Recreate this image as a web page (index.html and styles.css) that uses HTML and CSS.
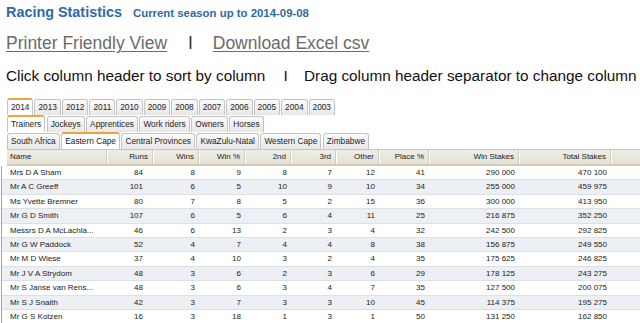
FILE: index.html
```html
<!DOCTYPE html>
<html lang="en">
<head>
  <meta charset="UTF-8" />
  <meta name="viewport" content="width=device-width, initial-scale=1.0" />
  <title>Racing Statistics</title>
  <link rel="stylesheet" href="styles.css">
</head>
<body>
  <div class="top">
    <h1 class="title">Racing Statistics <span class="season">Current season up to 2014-09-08</span></h1>

    <p class="links">
      <a href="#">Printer Friendly View</a>
      <span class="sep">I</span>
      <a href="#">Download Excel csv</a>
    </p>

    <p class="hint">Click column header to sort by column <span class="sep">I</span> Drag column header separator to change column</p>
  </div>

  <div class="tabs years">
    <span class="tab active">2014</span>
    <span class="tab">2013</span>
    <span class="tab">2012</span>
    <span class="tab">2011</span>
    <span class="tab">2010</span>
    <span class="tab">2009</span>
    <span class="tab">2008</span>
    <span class="tab">2007</span>
    <span class="tab">2006</span>
    <span class="tab">2005</span>
    <span class="tab">2004</span>
    <span class="tab">2003</span>
  </div>
  <div class="tabs">
    <span class="tab active">Trainers</span>
    <span class="tab">Jockeys</span>
    <span class="tab">Apprentices</span>
    <span class="tab">Work riders</span>
    <span class="tab">Owners</span>
    <span class="tab">Horses</span>
  </div>
  <div class="tabs">
    <span class="tab">South Africa</span>
    <span class="tab active">Eastern Cape</span>
    <span class="tab">Central Provinces</span>
    <span class="tab">KwaZulu-Natal</span>
    <span class="tab">Western Cape</span>
    <span class="tab">Zimbabwe</span>
  </div>

  <div class="grid">
    <div class="grid-head">
      <span class="hcell name">Name</span>
      <span class="hcell">Runs</span>
      <span class="hcell">Wins</span>
      <span class="hcell">Win %</span>
      <span class="hcell">2nd</span>
      <span class="hcell">3rd</span>
      <span class="hcell">Other</span>
      <span class="hcell">Place %</span>
      <span class="hcell">Win Stakes</span>
      <span class="hcell">Total Stakes</span>
      <span class="hcell filler"></span>
    </div>
    <div class="grid-body" id="rows"></div>
  </div>

  <script>
    const trainers = [
      ["Mrs D A Sham", 84, 8, 9, 8, 7, 12, 41, "290 000", "470 100"],
      ["Mr A C Greeff", 101, 6, 5, 10, 9, 10, 34, "255 000", "459 975"],
      ["Ms Yvette Bremner", 80, 7, 8, 5, 2, 15, 36, "300 000", "413 950"],
      ["Mr G D Smith", 107, 6, 5, 6, 4, 11, 25, "216 875", "352 250"],
      ["Messrs D A McLachla...", 46, 6, 13, 2, 3, 4, 32, "242 500", "292 825"],
      ["Mr G W Paddock", 52, 4, 7, 4, 4, 8, 38, "156 875", "249 550"],
      ["Mr M D Wiese", 37, 4, 10, 3, 2, 4, 35, "175 625", "246 825"],
      ["Mr J V A Strydom", 48, 3, 6, 2, 3, 6, 29, "178 125", "243 275"],
      ["Mr S Janse van Rens...", 48, 3, 6, 3, 4, 7, 35, "127 500", "200 075"],
      ["Mr S J Snaith", 42, 3, 7, 3, 3, 10, 45, "114 375", "195 275"],
      ["Mr G S Kotzen", 16, 3, 18, 1, 3, 1, 50, "131 250", "162 850"]
    ];

    const rows = document.getElementById("rows");
    trainers.forEach(t => {
      const row = document.createElement("div");
      row.className = "row";
      t.forEach((value, i) => {
        const cell = document.createElement("span");
        cell.className = i === 0 ? "cell name" : "cell";
        cell.textContent = value;
        row.appendChild(cell);
      });
      rows.appendChild(row);
    });
  </script>
</body>
</html>
```

FILE: styles.css
```css
:root {
  --title-blue: #2f6aa5;
  --link-gray: #6b6b6b;
  --tab-border: #c4c4c4;
  --tab-active: #f2a23c;
  --head-bg: #e9e7dd;
  --stripe: #eceff3;
  --line: #dde1e6;
}

* {
  box-sizing: border-box;
}

body {
  margin: 0;
  font-family: 'Liberation Sans', Arial, sans-serif;
  color: #111;
  background: #fff;
  overflow: hidden;
}

.top {
  padding-left: 6px;
}

.title {
  margin: 0;
  height: 24px;
  line-height: 24px;
  font-size: 14.4px;
  font-weight: bold;
  color: var(--title-blue);
}

.season {
  margin-left: 7px;
  font-size: 11.4px;
}

.links {
  margin: 7px 0 0;
  height: 24px;
  line-height: 24px;
  font-size: 17.5px;
}

.links a {
  color: var(--link-gray);
  text-decoration: underline;
  text-underline-offset: 2px;
  text-decoration-thickness: 1px;
}

.links .sep {
  color: #333;
  margin: 0 15px 0 16px;
}

.hint {
  margin: 9px 0 0;
  height: 24px;
  line-height: 24px;
  font-size: 15.3px;
  white-space: nowrap;
}

.hint .sep {
  margin: 0 12px 0 14px;
}

/* tab strips */
.tabs {
  display: flex;
  align-items: flex-end;
  gap: 1.5px;
  padding-left: 7px;
  height: 17px;
}

.tabs.years {
  gap: 1px;
  margin-top: 10px;
}

.tab {
  height: 16px;
  line-height: 15px;
  padding: 0 3px;
  font-size: 8.3px;
  color: #222;
  border: 1px solid var(--tab-border);
  border-bottom: none;
  border-radius: 3px 3px 0 0;
  background: linear-gradient(#fbfbfb, #e7e7e7);
  white-space: nowrap;
}

.tab.active {
  height: 17px;
  background: #fff;
  border-top: 2px solid var(--tab-active);
}

/* grid */
.grid {
  font-size: 8px;
}

.grid-head {
  display: grid;
  grid-template-columns: 100px 46px 46px 46px 46px 45px 43px 50px 90px 92px 1fr;
  height: 17px;
  margin-left: 7px;
  background: linear-gradient(#efeee6, #e3e1d6);
  border-top: 1px solid #c9c6b8;
  border-bottom: 2px solid #d4cbb0;
}

.hcell {
  line-height: 14px;
  padding-right: 4px;
  text-align: right;
  color: #222;
  border-right: 1px solid #cfccbf;
  box-shadow: 1px 0 0 #fff;
}

.hcell.name {
  text-align: left;
  padding-left: 3px;
}

.hcell.filler {
  border-right: none;
  box-shadow: none;
}

.grid-body {
  margin-left: 1px;
  border-left: 1px solid #8ea9c9;
}

.row {
  display: grid;
  grid-template-columns: 105px 46px 46px 46px 46px 45px 43px 50px 90px 92px 1fr;
  height: 14.4px;
  line-height: 13.4px;
  border-bottom: 1px solid var(--line);
  color: #222;
}

.row:nth-child(even) {
  background: var(--stripe);
}

.cell {
  text-align: right;
  padding-right: 4px;
}

.cell:nth-child(2) {
  padding-right: 10px;
}

.cell.name {
  text-align: left;
  padding-left: 8px;
  white-space: nowrap;
}
```
